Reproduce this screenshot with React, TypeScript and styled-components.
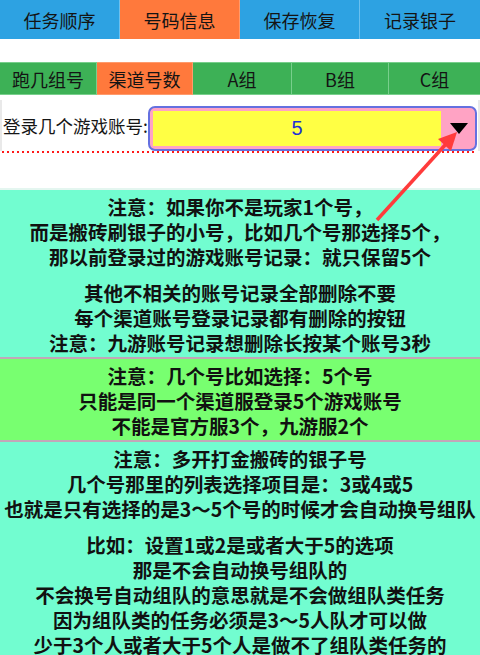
import { FC } from "react"
import styled, { createGlobalStyle } from "styled-components"

const GlobalStyle = createGlobalStyle`
  html, body {
    margin: 0;
    padding: 0;
    background: #ffffff;
  }
  body {
    font-family: "Noto Sans CJK SC", "Noto Sans", sans-serif;
    color: #111;
  }
`

const blue = "#2da2e2"
const orange = "#ff793c"
const green = "#3db156"
const aqua = "#72fdd0"
const lime = "#78ff70"

const Page = styled.div`
  position: relative;
  width: 480px;
  height: 655px;
  overflow: hidden;
  background: #fff;
`

const TopTabs = styled.div`
  display: grid;
  grid-template-columns: repeat(4, 1fr);
  height: 39px;
`

const Tab = styled.div<{ $bg: string; $line: string }>`
  display: flex;
  align-items: center;
  justify-content: center;
  background: ${(p) => p.$bg};
  border-right: 1px solid ${(p) => p.$line};
  font-size: 18px;
  color: #141414;
  &:last-child {
    border-right: none;
  }
`

const SubTabs = styled.div`
  display: grid;
  grid-template-columns: 97px 96px 99px 97px 91px;
  height: 33px;
  margin-top: 23px;
`

const SubTab = styled(Tab)`
  border-top: 1px solid ${(p) => p.$line};
  border-bottom: 1px solid ${(p) => p.$line};
`

const FormRow = styled.div`
  display: flex;
  align-items: center;
  height: 51px;
  margin-top: 5px;
  padding: 0 1px 0 1px;
  border-left: 2px solid #e9e9e9;
  border-right: 2px solid #e9e9e9;
`

const Label = styled.span`
  flex-shrink: 0;
  font-size: 17.5px;
  color: #151515;
  white-space: nowrap;
`

const Select = styled.div`
  flex: 1;
  display: flex;
  height: 35px;
  padding: 3px;
  border: 2px solid #6470e0;
  border-radius: 7px;
  background: #ffa3c4;
  margin-top: 6px;
`

const Field = styled.div`
  flex: 1;
  display: flex;
  align-items: center;
  justify-content: center;
  background: #ffff44;
  color: #1f2fd6;
  font-family: "Liberation Sans", sans-serif;
  font-size: 20px;
`

const ArrowCell = styled.div`
  width: 31px;
  display: flex;
  align-items: center;
  justify-content: center;
`

const Triangle = styled.div`
  width: 0;
  height: 0;
  border-left: 9px solid transparent;
  border-right: 9px solid transparent;
  border-top: 11px solid #000;
  margin-left: 4px;
`

const DottedLine = styled.div`
  height: 2px;
  margin: 0 4px 35px 2px;
  background: repeating-linear-gradient(
    to right,
    #ff1a1a 0,
    #ff1a1a 2.5px,
    transparent 2.5px,
    transparent 5px
  );
`

const Notice = styled.div<{ $bg: string; $divider?: boolean }>`
  background: ${(p) => p.$bg};
  border-top: 2px solid ${(p) => (p.$divider ? "#c2a7b8" : "#e4f6f0")};
  padding: 4px 0 2px;
  text-align: center;
  font-weight: 700;
  font-size: 19.5px;
  line-height: 25px;
  color: #111;
`

const Para = styled.div`
  & + & {
    margin-top: 11px;
  }
`

const Line = styled.div`
  white-space: nowrap;
`

const Pointer = styled.svg`
  position: absolute;
  left: 0;
  top: 0;
  pointer-events: none;
`

const topTabs = [
  { label: "任务顺序", bg: blue },
  { label: "号码信息", bg: orange },
  { label: "保存恢复", bg: blue },
  { label: "记录银子", bg: blue },
]

const subTabs = [
  { label: "跑几组号", bg: green },
  { label: "渠道号数", bg: orange },
  { label: "A组", bg: green },
  { label: "B组", bg: green },
  { label: "C组", bg: green },
]

const notices: { bg: string; paras: string[][] }[] = [
  {
    bg: aqua,
    paras: [
      [
        "注意：如果你不是玩家1个号，",
        "而是搬砖刷银子的小号，比如几个号那选择5个，",
        "那以前登录过的游戏账号记录：就只保留5个",
      ],
      [
        "其他不相关的账号记录全部删除不要",
        "每个渠道账号登录记录都有删除的按钮",
        "注意：九游账号记录想删除长按某个账号3秒",
      ],
    ],
  },
  {
    bg: lime,
    paras: [
      [
        "注意：几个号比如选择：5个号",
        "只能是同一个渠道服登录5个游戏账号",
        "不能是官方服3个，九游服2个",
      ],
    ],
  },
  {
    bg: aqua,
    paras: [
      [
        "注意：多开打金搬砖的银子号",
        "几个号那里的列表选择项目是：3或4或5",
        "也就是只有选择的是3～5个号的时候才会自动换号组队",
      ],
      [
        "比如：设置1或2是或者大于5的选项",
        "那是不会自动换号组队的",
        "不会换号自动组队的意思就是不会做组队类任务",
        "因为组队类的任务必须是3～5人队才可以做",
        "少于3个人或者大于5个人是做不了组队类任务的",
      ],
    ],
  },
]

const lineFor = (bg: string) => (bg === orange ? "#ff9a6c" : bg === blue ? "#6cc0ee" : "#78cf8c")

const App: FC = () => {
  return (
    <Page>
      <GlobalStyle />
      <TopTabs>
        {topTabs.map((t) => (
          <Tab key={t.label} $bg={t.bg} $line={lineFor(t.bg)}>
            {t.label}
          </Tab>
        ))}
      </TopTabs>
      <SubTabs>
        {subTabs.map((t) => (
          <SubTab key={t.label} $bg={t.bg} $line={lineFor(t.bg)}>
            {t.label}
          </SubTab>
        ))}
      </SubTabs>
      <FormRow>
        <Label>登录几个游戏账号:</Label>
        <Select>
          <Field>5</Field>
          <ArrowCell>
            <Triangle />
          </ArrowCell>
        </Select>
      </FormRow>
      <DottedLine />
      {notices.map((n, i) => (
        <Notice key={i} $bg={n.bg} $divider={i > 0}>
          {n.paras.map((p, j) => (
            <Para key={j}>
              {p.map((l) => (
                <Line key={l}>{l}</Line>
              ))}
            </Para>
          ))}
        </Notice>
      ))}
      <Pointer width="480" height="260" viewBox="0 0 480 260">
        <line x1="377" y1="220" x2="446" y2="144" stroke="#ff3b3b" strokeWidth="3.5" />
        <polygon points="457,132 451,151 438,139" fill="#ff3b3b" />
      </Pointer>
    </Page>
  )
}

export default App
